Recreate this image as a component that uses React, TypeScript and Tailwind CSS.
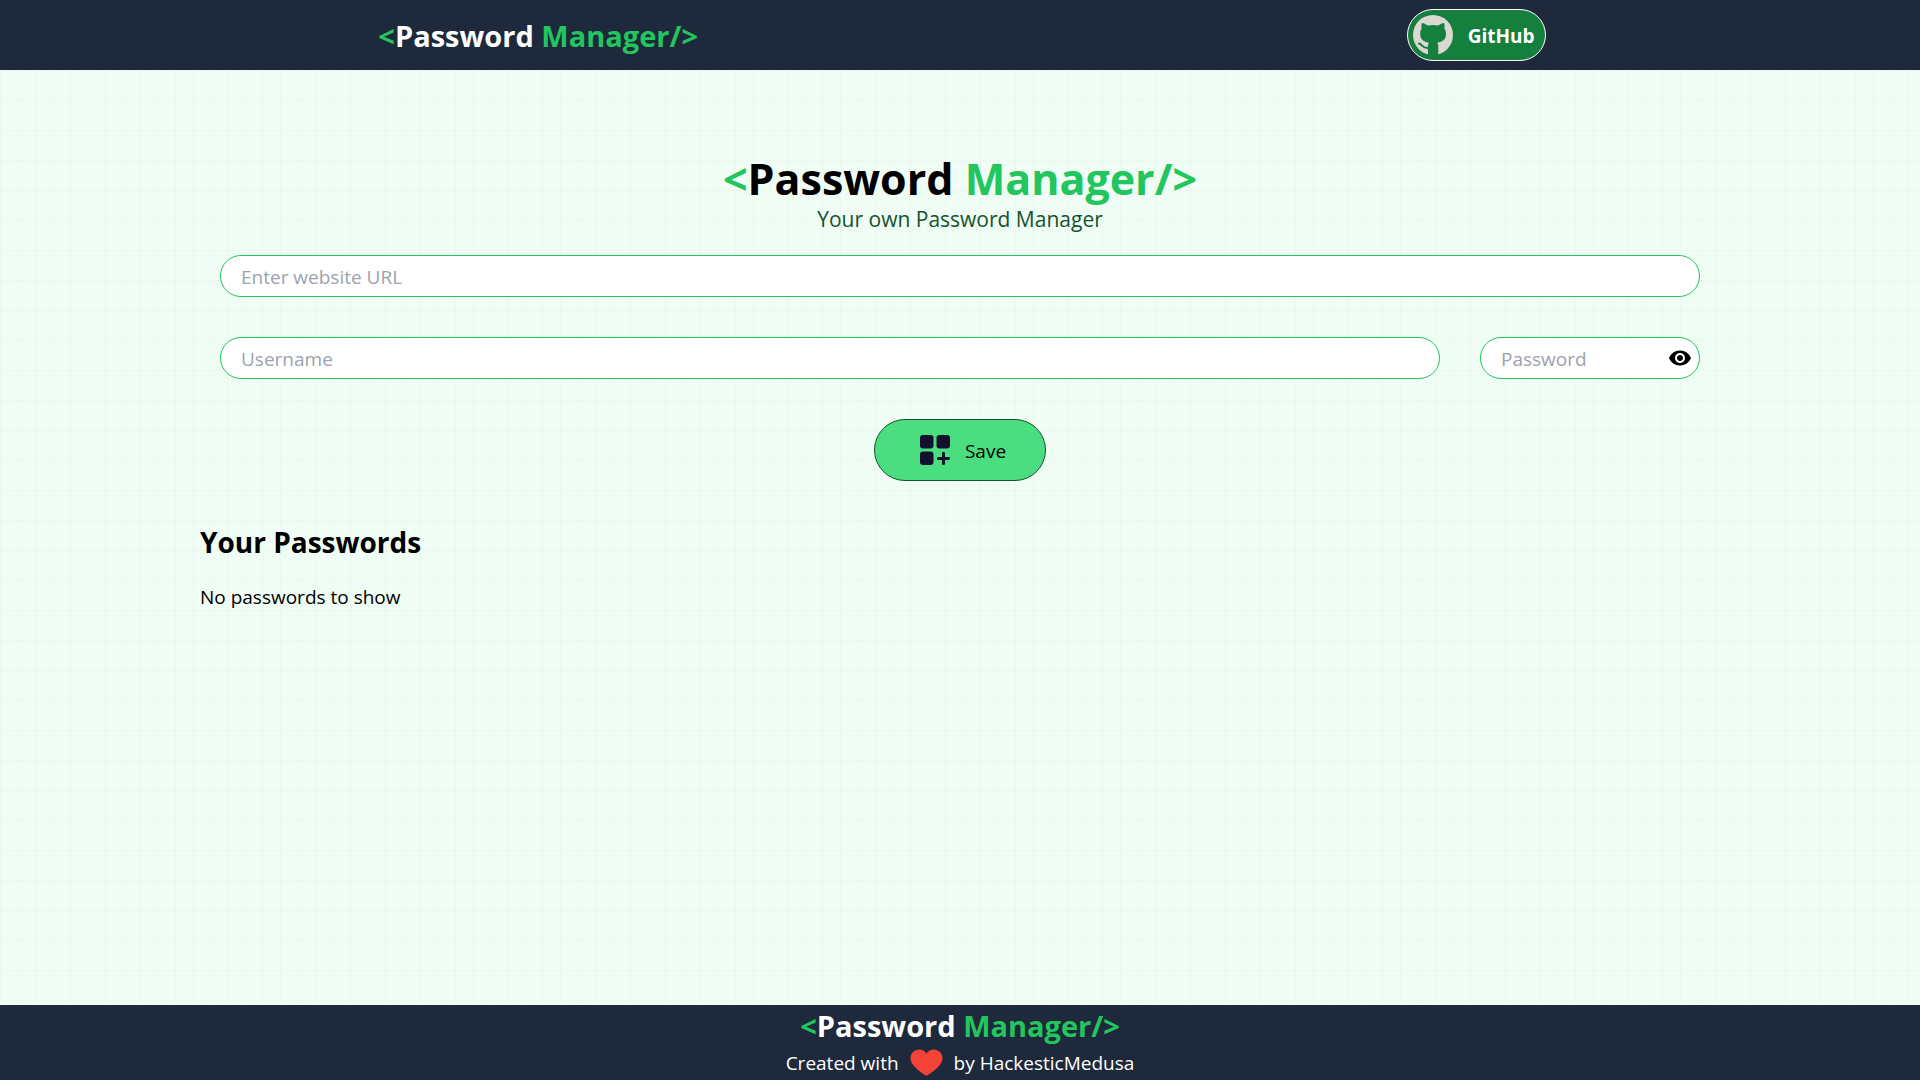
import { useState } from "react";
import { MdVisibility } from "react-icons/md";

function Brand() {
  return (
    <>
      <span className="text-[#22c55e]">&lt;</span>
      <span>Password </span>
      <span className="text-[#22c55e]">Manager/&gt;</span>
    </>
  );
}

function GitHubIcon() {
  return (
    <svg viewBox="0 0 40 40" className="size-10" aria-hidden="true">
      <circle cx="20" cy="20" r="20" fill="#dbd7d2" />
      <path
        fill="#15803d"
        d="M9 8C11 8 13 9.3 14.8 10.6Q20 9.4 25.2 10.6C27 9.3 29 8 31 8C31.8 10 31.8 12 31.3 13.6C32.6 15.2 33 17 33 18.8C33 24.5 29.5 27 24.3 27.8C25 28.8 25.3 30 25.3 31.5V40H14.9V31.5C14.9 30 15.2 28.8 15.9 27.8C10.7 27 7.2 24.5 7.2 18.8C7.2 17 7.6 15.2 8.8 13.6C8.3 12 8.2 10 9 8Z"
      />
      <path
        d="M6 28.6C9.2 28.8 8.8 33.6 15.4 32.9"
        fill="none"
        stroke="#15803d"
        strokeWidth="2"
        strokeLinecap="round"
      />
    </svg>
  );
}

function SaveIcon() {
  return (
    <svg viewBox="0 0 30 30" className="size-[30px]" fill="#12122f" aria-hidden="true">
      <rect x="0" y="0" width="13.5" height="13.5" rx="3" />
      <rect x="16.5" y="0" width="13.5" height="13.5" rx="3" />
      <rect x="0" y="16.5" width="13.5" height="13.5" rx="3" />
      <path
        d="M23.5 18.3v10.2M18.4 23.4h10.2"
        stroke="#12122f"
        strokeWidth="3"
        strokeLinecap="round"
      />
    </svg>
  );
}

function HeartIcon() {
  return (
    <svg viewBox="0 0 48 48" className="mb-1.5 size-[35px]" fill="#f44336" role="img" aria-label="love">
      <path d="M34 9c-4.2 0-7.9 2.1-10 5.4C21.9 11.1 18.2 9 14 9 7.4 9 2 14.4 2 21c0 11.9 22 24 22 24s22-12 22-24c0-6.6-5.4-12-12-12z" />
    </svg>
  );
}

const field =
  "h-[42px] w-full rounded-full border border-[#22c55e] bg-white px-5 pt-0.5 text-[19px] text-black placeholder:text-[#9ca3af] outline-none";

export default function App() {
  const [visible, setVisible] = useState(false);
  return (
    <div className="flex min-h-screen flex-col bg-[#f0fdf4] font-['Open_Sans','Noto_Sans',sans-serif] text-[19px] text-black">
      <header className="flex h-[70px] items-center justify-around bg-[#1e293b] pr-5 pl-6 text-white">
        <a href="#" className="pt-0.5 text-[29px] font-bold">
          <Brand />
        </a>
        <a
          href="#github"
          className="flex h-[52px] items-center gap-[15px] rounded-full border border-white bg-[#15803d] pr-[10px] pl-[5px] font-bold"
        >
          <GitHubIcon />
          <span className="pt-0.5">GitHub</span>
        </a>
      </header>

      <main className="grow bg-[linear-gradient(to_right,#8080800a_1px,transparent_1px),linear-gradient(to_bottom,#8080800a_1px,transparent_1px)] bg-[size:17.5px_30px] px-5 pt-[84px]">
        <div className="mx-auto max-w-[1520px]">
          <h1 className="text-center text-[43px] leading-[50px] font-bold">
            <Brand />
          </h1>
          <p className="text-center text-[21px] leading-[30px] text-[#14532d]">
            Your own Password Manager
          </p>

          <form
            className="flex flex-col items-center gap-10 px-5 pt-[21px]"
            onSubmit={(e) => e.preventDefault()}
          >
            <input type="text" aria-label="Website URL" placeholder="Enter website URL" className={field} />
            <div className="flex w-full gap-10">
              <input type="text" aria-label="Username" placeholder="Username" className={field} />
              <div className="relative w-[220px] shrink-0">
                <input
                  type={visible ? "text" : "password"}
                  aria-label="Password"
                  placeholder="Password"
                  className={field}
                />
                <button
                  type="button"
                  aria-label="Show password"
                  onClick={() => setVisible(!visible)}
                  className="absolute inset-y-0 right-2 flex items-center"
                >
                  <MdVisibility className="size-6" />
                </button>
              </div>
            </div>
            <button
              type="submit"
              className="flex h-[62px] w-[172px] items-center justify-center gap-[15px] rounded-full border border-[#14532d] bg-[#4ade80] pl-1.5"
            >
              <SaveIcon />
              <span className="pt-0.5">Save</span>
            </button>
          </form>

          <section className="pt-[41px]">
            <h2 className="text-[28px] leading-10 font-bold">Your Passwords</h2>
            <p className="pt-5 leading-[30px]">No passwords to show</p>
          </section>
        </div>
      </main>

      <footer className="flex h-[75px] flex-col items-center bg-[#1e293b] text-white">
        <div className="text-[29px] leading-[42px] font-bold">
          <Brand />
        </div>
        <div className="flex h-[33px] items-center gap-[10px]">
          <span>Created with</span>
          <HeartIcon />
          <span>by HackesticMedusa</span>
        </div>
      </footer>
    </div>
  );
}
